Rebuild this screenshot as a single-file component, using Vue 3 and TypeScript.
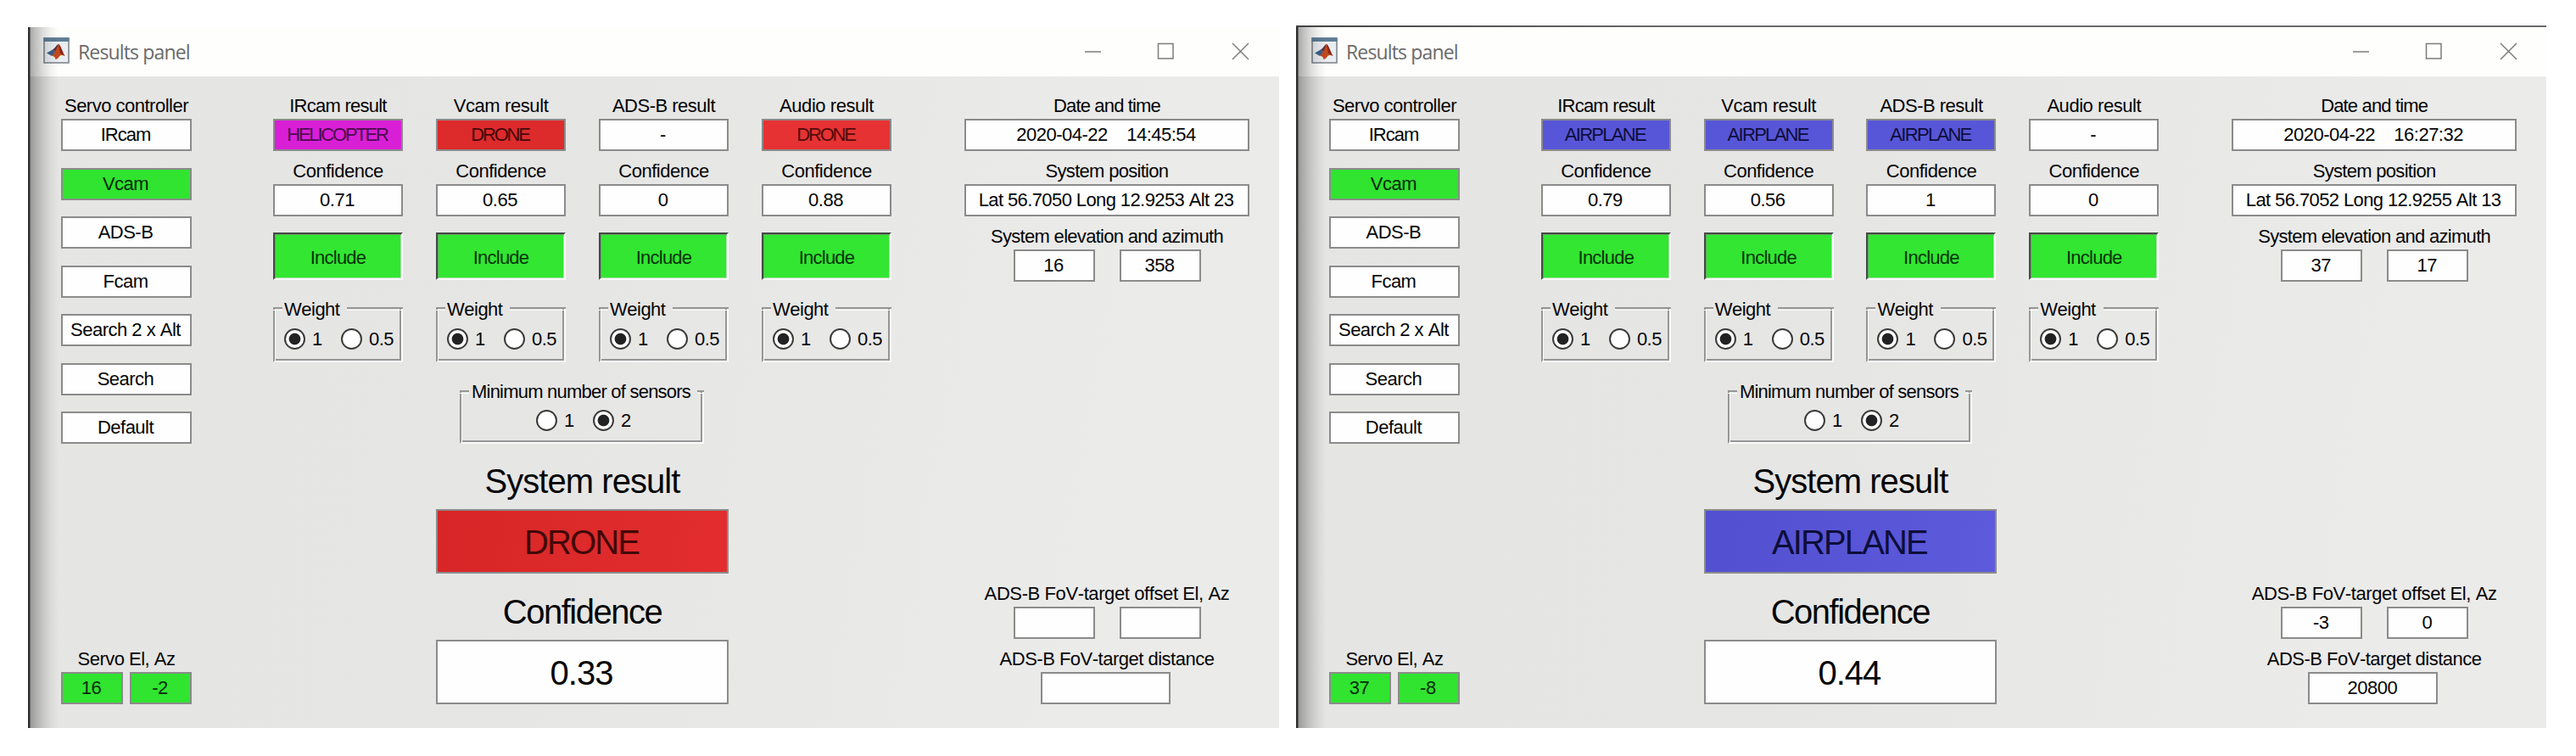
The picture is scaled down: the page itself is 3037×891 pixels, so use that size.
<script setup lang="ts">
interface Sensor { name: string; ls: number; result: string; tone: string; confidence: string }
interface Panel {
  id: string
  sensors: Sensor[]
  time: string
  position: string
  elevation: string
  azimuth: string
  offsetEl: string
  offsetAz: string
  distance: string
  servoEl: string
  servoAz: string
  system: string
  systemTone: string
  systemConfidence: string
}

const servoButtons = ['IRcam', 'Vcam', 'ADS-B', 'Fcam', 'Search 2 x Alt', 'Search', 'Default']

const panels: Panel[] = [
  {
    id: 'first',
    sensors: [
      { name: 'IRcam result', ls: -0.75, result: 'HELICOPTER', tone: 'magenta', confidence: '0.71' },
      { name: 'Vcam result', ls: -0.4, result: 'DRONE', tone: 'red', confidence: '0.65' },
      { name: 'ADS-B result', ls: -0.5, result: '-', tone: 'plain', confidence: '0' },
      { name: 'Audio result', ls: -0.45, result: 'DRONE', tone: 'bright-red', confidence: '0.88' },
    ],
    time: '2020-04-22    14:45:54',
    position: 'Lat 56.7050 Long 12.9253 Alt 23',
    elevation: '16',
    azimuth: '358',
    offsetEl: '',
    offsetAz: '',
    distance: '',
    servoEl: '16',
    servoAz: '-2',
    system: 'DRONE',
    systemTone: 'red',
    systemConfidence: '0.33',
  },
  {
    id: 'second',
    sensors: [
      { name: 'IRcam result', ls: -0.75, result: 'AIRPLANE', tone: 'blue', confidence: '0.79' },
      { name: 'Vcam result', ls: -0.4, result: 'AIRPLANE', tone: 'blue', confidence: '0.56' },
      { name: 'ADS-B result', ls: -0.5, result: 'AIRPLANE', tone: 'blue', confidence: '1' },
      { name: 'Audio result', ls: -0.45, result: '-', tone: 'plain', confidence: '0' },
    ],
    time: '2020-04-22    16:27:32',
    position: 'Lat 56.7052 Long 12.9255 Alt 13',
    elevation: '37',
    azimuth: '17',
    offsetEl: '-3',
    offsetAz: '0',
    distance: '20800',
    servoEl: '37',
    servoAz: '-8',
    system: 'AIRPLANE',
    systemTone: 'blue',
    systemConfidence: '0.44',
  },
]
</script>

<template>
  <main class="desk">
    <section v-for="p in panels" :key="p.id" class="window" :class="p.id">
      <header class="titlebar">
        <svg class="logo" viewBox="0 0 31 31">
          <rect x="1" y="1" width="29" height="29" fill="#e9edef" stroke="#80888e" stroke-width="1.6" />
          <rect x="0.5" y="0.5" width="30" height="4.5" fill="#5c7d96" />
          <path d="M4 18.5 L11 14.5 L14 17 L10 22 Z" fill="#3b5f88" />
          <path d="M11 14.5 C14 13 15.5 8.5 18 8 L15 19 L10 22 L14 17 Z" fill="#5d3140" />
          <path d="M18 8 C20.5 9 22.5 17.5 25.5 22 C22.5 20.5 20.5 20.5 19 22.5 C17.5 24.5 16 26 14.5 26 C14 23 12 21.5 10 22 C14 19 16 12 18 8 Z" fill="#c04a1c" />
          <path d="M18 8 C20.5 9 22.5 17.5 25.5 22 C22.5 20 21 19 20 19 Z" fill="#8a2618" />
        </svg>
        <h1>Results panel</h1>
        <svg class="controls" viewBox="0 0 196 22">
          <path d="M1 12 H20" />
          <rect x="87.5" y="2.5" width="17.5" height="17.5" />
          <path d="M175 2 L194 21 M194 2 L175 21" />
        </svg>
      </header>

      <div class="body">
        <div class="servo">
          <div class="label">Servo controller</div>
          <div class="servo-list">
            <div v-for="b in servoButtons" :key="b" class="box" :class="{ green: b === 'Vcam', tight: b === 'IRcam' }">{{ b }}</div>
          </div>
          <div class="bottom">
            <div class="label">Servo El, Az</div>
            <div class="servo-pair">
              <div class="box green">{{ p.servoEl }}</div>
              <div class="box green">{{ p.servoAz }}</div>
            </div>
          </div>
        </div>

        <div class="center">
          <div class="sensors">
            <div v-for="s in p.sensors" :key="s.name" class="sensor">
              <div class="label" :style="{ letterSpacing: s.ls + 'px' }">{{ s.name }}</div>
              <div class="box" :class="[s.tone, s.result.toLowerCase()]">{{ s.result }}</div>
              <div class="label second-label">Confidence</div>
              <div class="box">{{ s.confidence }}</div>
              <div class="include">Include</div>
              <div class="group">
                <div class="legend"><i class="stub"></i><span>Weight</span><i class="rule"></i></div>
                <div class="choices">
                  <i class="radio on"></i><b>1</b><i class="radio"></i><b>0.5</b>
                </div>
              </div>
            </div>
          </div>

          <div class="group minimum">
            <div class="legend"><i class="stub"></i><span>Minimum number of sensors</span><i class="rule"></i></div>
            <div class="choices">
              <i class="radio"></i><b>1</b><i class="radio on"></i><b>2</b>
            </div>
          </div>

          <div class="system">
            <div class="big-label">System result</div>
            <div class="big-box" :class="[p.systemTone, 'verdict']">{{ p.system }}</div>
            <div class="big-label narrow">Confidence</div>
            <div class="big-box">{{ p.systemConfidence }}</div>
          </div>
        </div>

        <div class="info">
          <div class="label date">Date and time</div>
          <div class="box">{{ p.time }}</div>
          <div class="label spaced snug">System position</div>
          <div class="box position">{{ p.position }}</div>
          <div class="label spaced snug">System elevation and azimuth</div>
          <div class="pair">
            <div class="box">{{ p.elevation }}</div>
            <div class="box">{{ p.azimuth }}</div>
          </div>
          <div class="bottom">
            <div class="label wide">ADS-B FoV-target offset El, Az</div>
            <div class="pair">
              <div class="box">{{ p.offsetEl }}</div>
              <div class="box">{{ p.offsetAz }}</div>
            </div>
            <div class="label spaced">ADS-B FoV-target distance</div>
            <div class="box distance">{{ p.distance }}</div>
          </div>
        </div>
      </div>
    </section>
  </main>
</template>

<style>
body { margin: 0; background: #fff; }
</style>

<style scoped>
* { box-sizing: border-box; }
.desk {
  width: 3037px; height: 891px; padding: 32px 35px 33px 33px;
  display: flex; justify-content: space-between; background: #fff;
  font-family: "Liberation Sans", Arial, sans-serif; font-size: 22px; letter-spacing: -.5px; color: #050505;
  font-kerning: none; font-variant-ligatures: none;
}
.window { position: relative; width: 1475px; height: 826px; display: flex; flex-direction: column; }
.window.second { width: 1474px; }
.window.second::before { content: ""; position: absolute; left: 0; right: 0; top: -2px; height: 2px; background: linear-gradient(90deg, #444, #6a6a6a 30%); }
.window::after {
  content: ""; position: absolute; left: 0; top: 0; bottom: 0; width: 36px; pointer-events: none;
  background: linear-gradient(90deg, #2e2e2e 0, #2e2e2e 2px, rgba(0,0,0,.33) 3px, rgba(0,0,0,.24) 9px, rgba(0,0,0,.13) 18px, rgba(0,0,0,.05) 27px, rgba(0,0,0,0) 36px);
}
.titlebar { flex: none; height: 58px; background: #fefefd; display: flex; align-items: center; padding: 0 34px 0 18px; }
.second .titlebar { padding-right: 33px; }
.logo { width: 31px; height: 31px; margin-top: -3px; }
h1 { margin: 0 auto 0 10px; font: 400 23px/30px "Open Sans", "Noto Sans", sans-serif; letter-spacing: -.85px; color: #6a6a6a; padding-bottom: 1px; }
.controls { width: 196px; height: 22px; fill: none; stroke: #7c7c7c; stroke-width: 1.5; margin-top: -3px; }
.body { flex: 1; min-height: 0; display: flex; padding: 20px 35px 28px 39px; background: linear-gradient(100deg, #e5e5e4, #e6e6e5 45%, #ebebea 85%); }
.servo { width: 154px; display: flex; flex-direction: column; }
.label { height: 30px; line-height: 30px; text-align: center; white-space: nowrap; }
.servo-list { display: flex; flex-direction: column; gap: 19.5px; }
.bottom { margin-top: auto; }
.box {
  height: 38px; line-height: 34px; border: 2px solid #8b8b8b; background: #fefefe;
  text-align: center; white-space: pre; padding-right: 2px;
}
.tight { letter-spacing: -1px; }
.servo-pair { display: grid; grid-template-columns: 73px 73px; justify-content: space-between; }
.green { background: #30e430; color: #042a04; }
.magenta { background: #d91fd6; color: #4b0b4b; }
.red { background: #dd2a2b; color: #420808; }
.bright-red { background: #e63232; color: #520b0b; }
.blue { background: #5856d8; color: #0e0e3a; }
.drone, .helicopter { letter-spacing: -2.2px; }
.airplane { letter-spacing: -1.7px; }
.center { width: 729px; margin-left: 96px; display: flex; flex-direction: column; }
.sensors { display: grid; grid-template-columns: repeat(4, 153px); justify-content: space-between; }
.second-label { margin-top: 9px; }
.include {
  height: 56px; margin-top: 19px; padding-top: 1px; line-height: 54px; text-align: center; letter-spacing: -.75px;
  background: #32e632; color: #053205;
  border: 2px solid; border-color: #454a45 #fafafa #fafafa #454a45;
  box-shadow: inset 1px 1px #63a163, inset -1px -1px #a7dfa7;
}
/* Etched frame: the top edge is drawn by the legend row so that it breaks around the caption. */
.group {
  height: 65px; margin-top: 32px; position: relative;
  border-left: 2px solid #969696; border-right: 2px solid #fbfbfb; border-bottom: 2px solid #fbfbfb;
  box-shadow: inset 1px 0 #fafafa, inset -2px -2px #969696;
}
.legend { display: flex; height: 24px; margin: 0 -2px -24px; }
.legend span { line-height: 24px; margin-top: -9px; padding: 0 9px 0 2px; white-space: nowrap; }
.stub, .rule { height: 4px; border-top: 2px solid #969696; border-bottom: 1px solid #fafafa; }
.stub { width: 11px; }
.rule { flex: 1; }
.choices { display: flex; align-items: center; padding: 25px 0 0 11px; }
.radio { width: 25px; height: 25px; border: 2px solid #3b3b3b; border-radius: 50%; background: #fefefe; }
.radio.on { background: radial-gradient(circle, #222 6.3px, #fefefe 7.3px); }
.choices b { font-weight: 400; line-height: 25px; width: 34px; padding-left: 8px; margin-right: 8px; }
.choices b:last-child { margin: 0; }
.minimum { width: 288px; height: 63px; margin: 33px 0 0 220px; }
.minimum .legend span { letter-spacing: -.78px; padding: 0 8px 0 3px; margin-top: -10px; }
.minimum .choices { padding: 23px 0 0 88px; }
.system { width: 345px; margin: 27px 0 0 192px; }
.big-label { height: 50px; line-height: 34px; font-size: 40px; letter-spacing: -.95px; text-align: center; white-space: nowrap; }
.big-label.narrow { letter-spacing: -1.5px; }
.big-box { height: 76px; line-height: 74px; border: 2px solid #8b8b8b; background: #fefefe; font-size: 40px; letter-spacing: -1px; text-align: center; padding-right: 2px; }
.red.big-box { background: linear-gradient(100deg, #d72627, #e32d2e); }
.blue.big-box { background: linear-gradient(100deg, #5250d0, #5d5bdc); }
.big-box.verdict { letter-spacing: -1.9px; }
.big-box + .big-label { margin-top: 28px; }
.info { width: 336px; margin-left: 86px; display: flex; flex-direction: column; }
.date { letter-spacing: -.85px; }
.spaced { margin-top: 9px; }
.snug { letter-spacing: -.7px; }
.position { letter-spacing: -.6px; }
.wide { letter-spacing: -.4px; }
.pair { display: grid; grid-template-columns: 96px 96px; gap: 29px; padding-left: 58px; }
.distance { width: 153px; margin-left: 90px; }
</style>
